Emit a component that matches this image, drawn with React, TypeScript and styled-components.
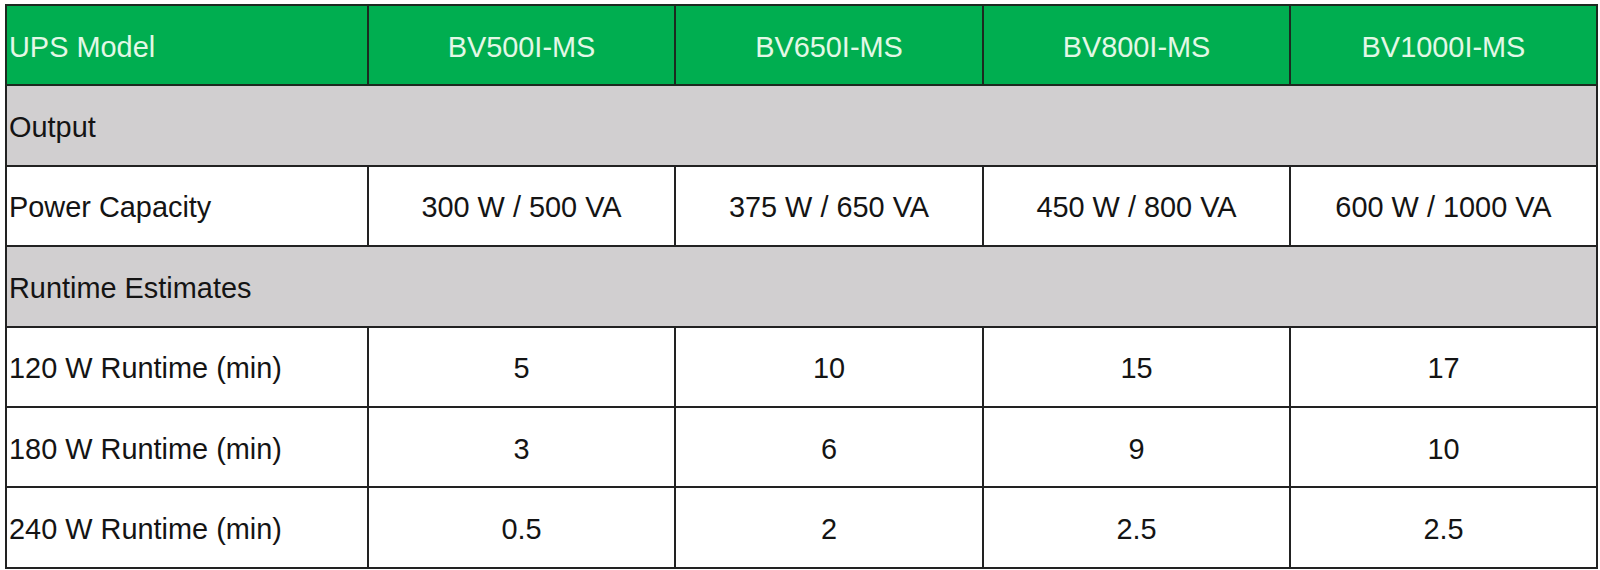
import React from "react";
import styled, { createGlobalStyle } from "styled-components";

const Global = createGlobalStyle`
  html, body { margin: 0; padding: 0; background: #ffffff; }
  body { font-family: "Liberation Sans", Arial, sans-serif; }
`;

const Page = styled.div`
  padding: 4px 0 0 5px;
`;

const Table = styled.table`
  border-collapse: collapse;
  table-layout: fixed;
  width: 1591px;
  font-family: "Liberation Sans", Arial, sans-serif;
  font-size: 28.9px;
  color: #141414;
`;

const Row = styled.tr`
  height: 80.4px;
`;

const HeadCell = styled.th<{ $left?: boolean }>`
  background: #00ae50;
  color: #e3f8e6;
  font-weight: 400;
  border: 2px solid #1c2a20;
  text-align: ${(p) => (p.$left ? "left" : "center")};
  padding: 4px 0 0 ${(p) => (p.$left ? "2px" : "0")};
  white-space: nowrap;
`;

const SectionCell = styled.td`
  background: #d1cfd0;
  border: 2px solid #222;
  text-align: left;
  padding: 4px 0 0 2px;
`;

const Cell = styled.td<{ $left?: boolean }>`
  background: #ffffff;
  border: 2px solid #222;
  text-align: ${(p) => (p.$left ? "left" : "center")};
  padding: 4px 0 0 ${(p) => (p.$left ? "2px" : "0")};
  white-space: nowrap;
`;

const models = ["BV500I-MS", "BV650I-MS", "BV800I-MS", "BV1000I-MS"];

type Section = { title: string; rows: { label: string; values: string[] }[] };

const sections: Section[] = [
  {
    title: "Output",
    rows: [
      {
        label: "Power Capacity",
        values: ["300 W / 500 VA", "375 W / 650 VA", "450 W / 800 VA", "600 W / 1000 VA"],
      },
    ],
  },
  {
    title: "Runtime Estimates",
    rows: [
      { label: "120 W Runtime (min)", values: ["5", "10", "15", "17"] },
      { label: "180 W Runtime (min)", values: ["3", "6", "9", "10"] },
      { label: "240 W Runtime (min)", values: ["0.5", "2", "2.5", "2.5"] },
    ],
  },
];

export default function App() {
  return (
    <>
      <Global />
      <Page>
        <Table>
          <colgroup>
            <col style={{ width: 362 }} />
            <col style={{ width: 307 }} />
            <col style={{ width: 308 }} />
            <col style={{ width: 307 }} />
            <col style={{ width: 307 }} />
          </colgroup>
          <thead>
            <Row>
              <HeadCell $left>UPS Model</HeadCell>
              {models.map((m) => (
                <HeadCell key={m}>{m}</HeadCell>
              ))}
            </Row>
          </thead>
          <tbody>
            {sections.map((s) => (
              <React.Fragment key={s.title}>
                <Row>
                  <SectionCell colSpan={5}>{s.title}</SectionCell>
                </Row>
                {s.rows.map((r) => (
                  <Row key={r.label}>
                    <Cell $left>{r.label}</Cell>
                    {r.values.map((v, i) => (
                      <Cell key={i}>{v}</Cell>
                    ))}
                  </Row>
                ))}
              </React.Fragment>
            ))}
          </tbody>
        </Table>
      </Page>
    </>
  );
}
